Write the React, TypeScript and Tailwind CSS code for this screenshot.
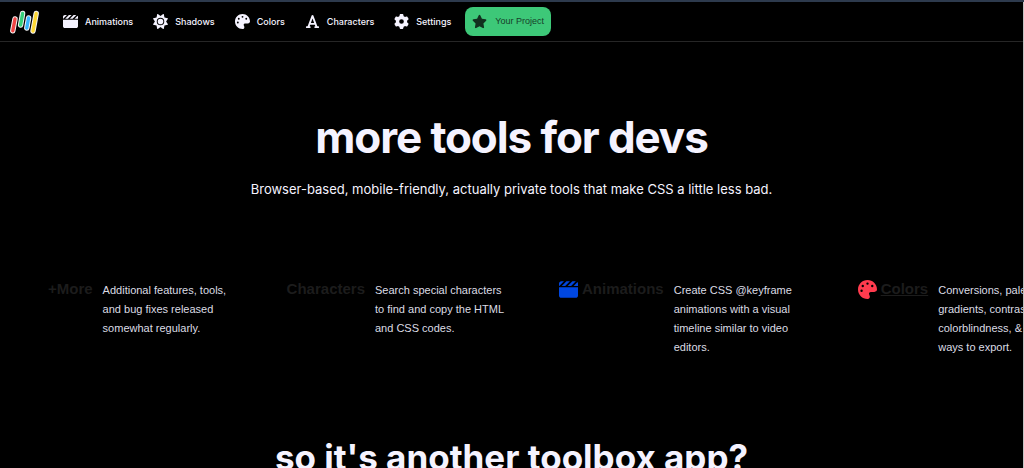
import type { ReactNode } from "react";
import {
  FaClapperboard,
  FaFont,
  FaGear,
  FaPalette,
  FaStar,
  FaSun,
} from "react-icons/fa6";

const navItems = [
  { label: "Animations", icon: FaClapperboard },
  { label: "Shadows", icon: FaSun },
  { label: "Colors", icon: FaPalette },
  { label: "Characters", icon: FaFont },
  { label: "Settings", icon: FaGear },
];

export default function App() {
  return (
    <div className="min-h-screen overflow-hidden border-t-2 border-[#2d3a4d] bg-black font-['Inter',sans-serif] text-[#f5f3ff]">
      <div className="min-h-screen border-r border-[#c4c4c4]">
        <Navbar />
        <main>
          <Hero />
          <ToolStrip />
          <h2 className="pt-[76px] text-center text-[35px] leading-12 font-bold">
            so it&apos;s another toolbox app?
          </h2>
        </main>
      </div>
    </div>
  );
}

function Navbar() {
  return (
    <header className="flex h-10 items-center border-b border-[#262626] pl-2">
      <a href="#" aria-label="Home" className="mr-[23px]">
        <Logo />
      </a>
      <nav className="flex items-center gap-5">
        {navItems.map(({ label, icon: Icon }) => (
          <a
            key={label}
            href={`#${label.toLowerCase()}`}
            className="flex items-center gap-[7px] text-[9px] font-medium"
          >
            <Icon className="size-[15px]" />
            {label}
          </a>
        ))}
      </nav>
      <button
        type="button"
        className="ml-3.5 flex h-[29px] items-center gap-2 rounded-lg bg-[#3dc878] px-[7px] font-['Liberation_Sans',sans-serif] text-[9px] text-[#17402a]"
      >
        <FaStar className="size-[15px] text-[#12301f]" />
        Your Project
      </button>
    </header>
  );
}

function Logo() {
  return (
    <svg viewBox="0 0 32 26" className="h-[26px] w-8" strokeLinecap="round">
      <g stroke="#f4f4f4" strokeWidth="5.4">
        <path d="M7 10 4.8 21.8" />
        <path d="M14.6 4.5 12.6 16" />
        <path d="M20.6 9 18.8 19" />
        <path d="M28.2 4.5 25 22" />
      </g>
      <g strokeWidth="3.4">
        <path d="M7 10 4.8 21.8" stroke="#ef4444" />
        <path d="M14.6 4.5 12.6 16" stroke="#34d27b" />
        <path d="M20.6 9 18.8 19" stroke="#38b6ff" />
        <path d="M28.2 4.5 25 22" stroke="#fdd835" />
      </g>
    </svg>
  );
}

function Hero() {
  return (
    <section className="pt-[65px] text-center">
      <h1 className="text-[44px] leading-[60px] font-bold tracking-tight">
        more tools for devs
      </h1>
      <p className="mt-3 text-[13px] leading-5">
        Browser-based, mobile-friendly, actually private tools that make CSS a
        little less bad.
      </p>
    </section>
  );
}

function ToolStrip() {
  return (
    <section className="mt-20 flex gap-[49px] overflow-hidden pl-12 font-['Liberation_Sans',sans-serif]">
      <ToolCard title="+More">
        Additional features, tools, and bug fixes released somewhat regularly.
      </ToolCard>
      <ToolCard title="Characters">
        Search special characters to find and copy the HTML and CSS codes.
      </ToolCard>
      <ToolCard
        title="Animations"
        icon={<FaClapperboard className="size-[19px] text-[#0047e0]" />}
      >
        Create CSS @keyframe animations with a visual timeline similar to video
        editors.
      </ToolCard>
      <ToolCard
        title="Colors"
        icon={<FaPalette className="size-[19px] text-[#ff3b4e]" />}
        active
      >
        Conversions, palettes, gradients, contrast, colorblindness, &amp; many
        ways to export.
      </ToolCard>
    </section>
  );
}

type ToolCardProps = {
  title: string;
  icon?: ReactNode;
  active?: boolean;
  children: ReactNode;
};

function ToolCard({ title, icon, active, children }: ToolCardProps) {
  return (
    <article className="flex shrink-0 items-start gap-[10px]">
      <a
        href={`#${title.toLowerCase()}`}
        className="flex items-center gap-1 text-[15px] leading-5 font-bold text-[#1c1c1c]"
      >
        {icon}
        <span className={active ? "underline" : ""}>{title}</span>
      </a>
      <p className="w-[135px] pt-0.5 text-[11px] leading-[19px] text-[#dcdce4]">
        {children}
      </p>
    </article>
  );
}
